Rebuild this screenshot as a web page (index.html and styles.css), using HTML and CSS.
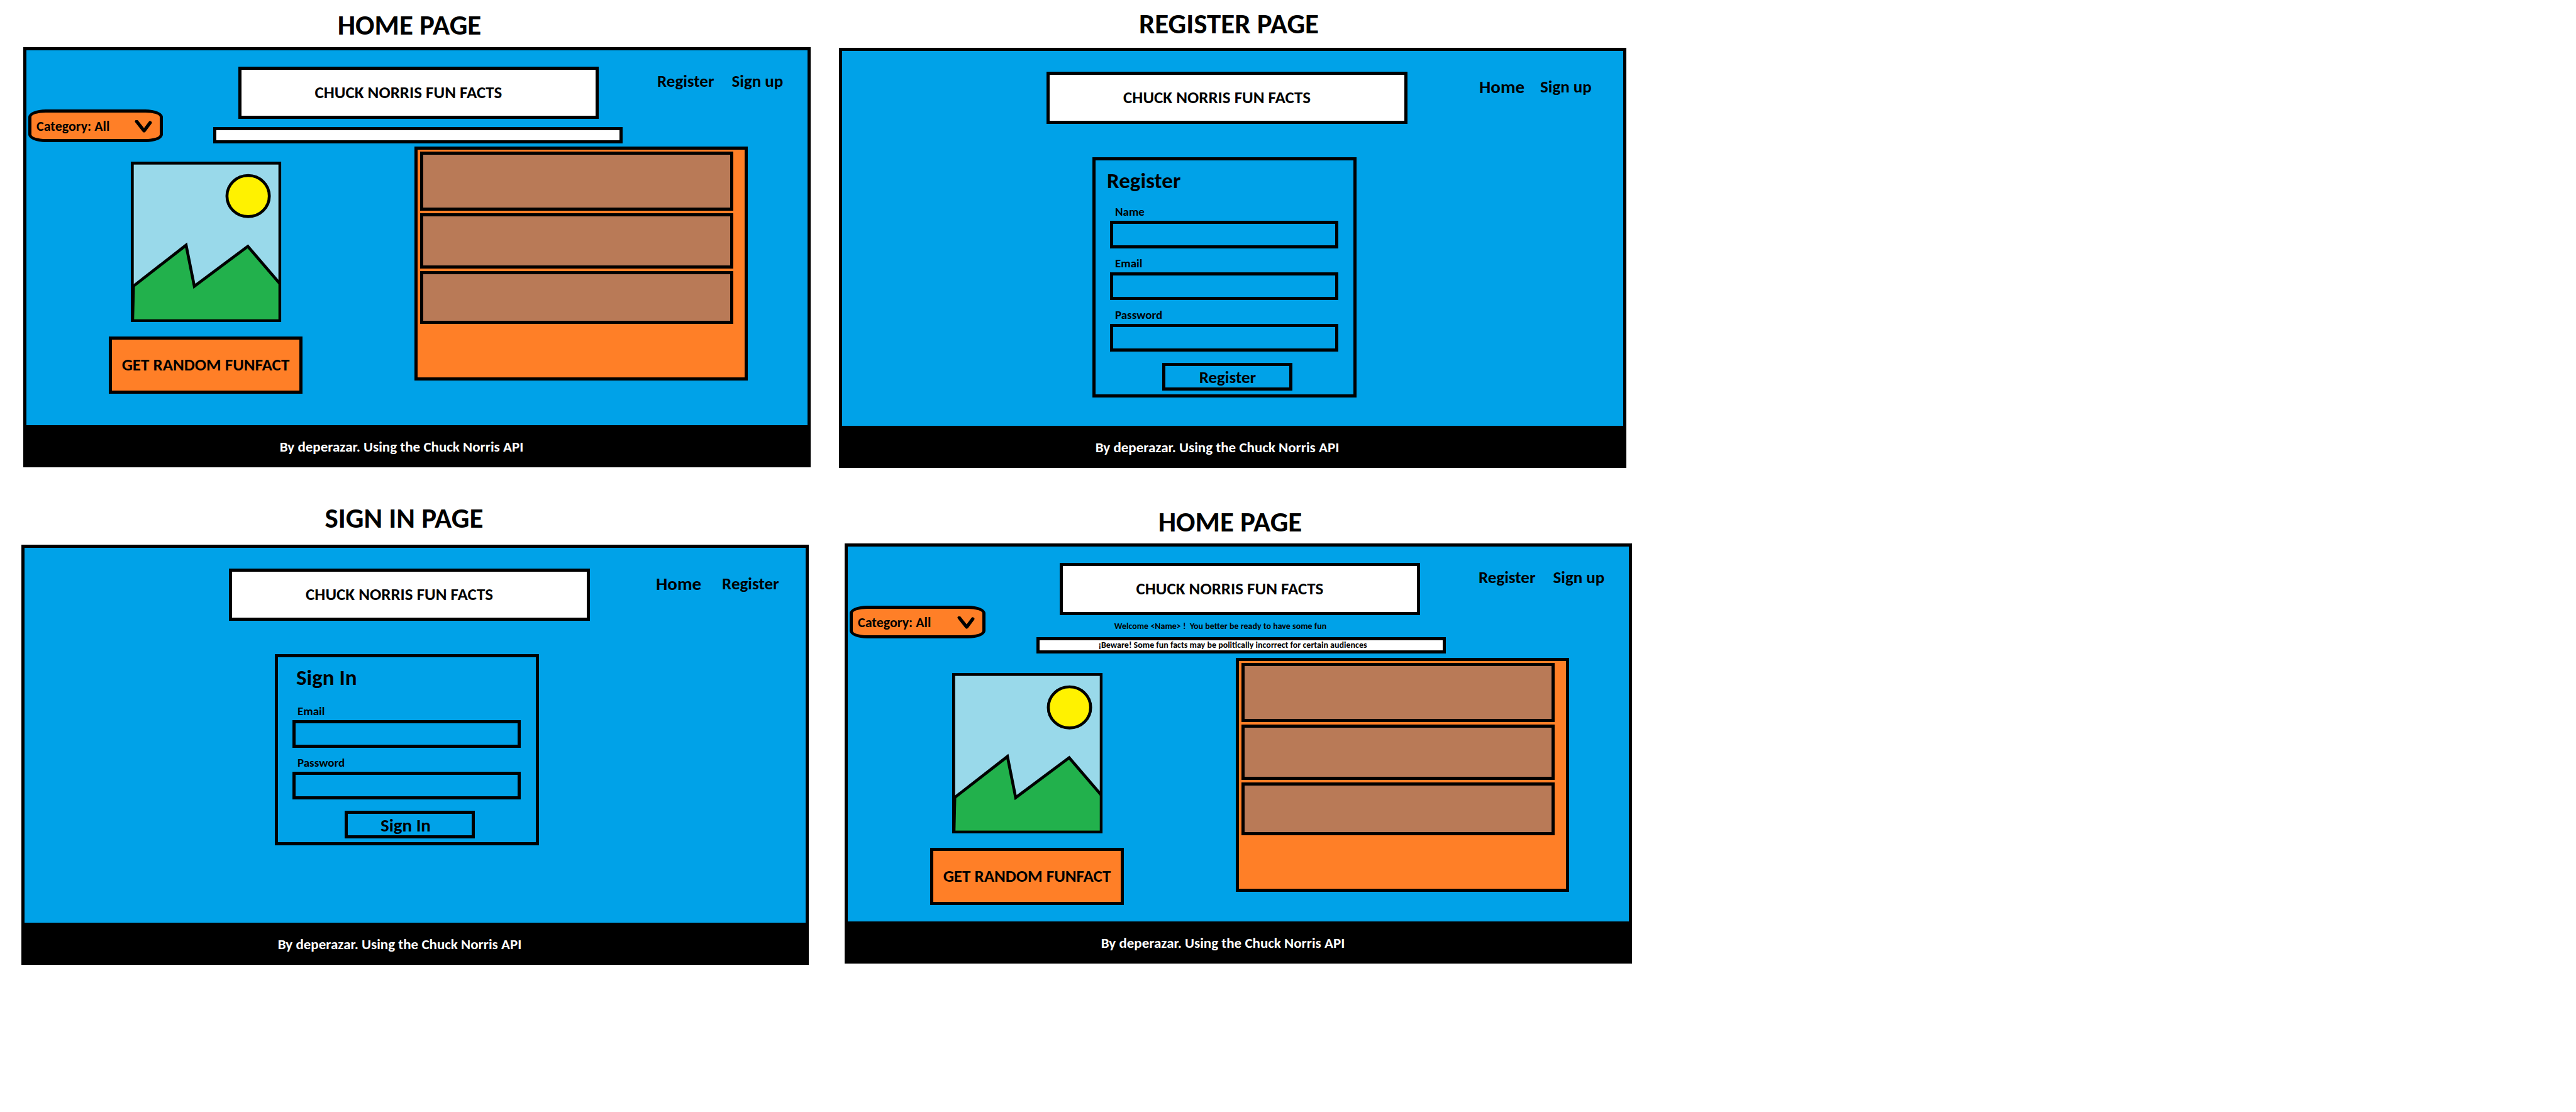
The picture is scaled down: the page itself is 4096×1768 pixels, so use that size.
FILE: index.html
```
<!DOCTYPE html>
<html lang="en">
<head>
<meta charset="utf-8">
<title>Chuck Norris Fun Facts - Wireframes</title>
<link rel="stylesheet" href="styles.css">
</head>
<body>
<svg class="sprite" aria-hidden="true">
  <symbol id="chevron" viewBox="0 0 26 20" preserveAspectRatio="none">
    <path d="M3 2 14 17 23 4" fill="none" stroke="#000" stroke-width="5" stroke-linecap="round" stroke-linejoin="round"/>
  </symbol>
  <symbol id="landscape" viewBox="0 0 256 273">
    <rect width="256" height="273" fill="#99d9ea"/>
    <path d="M4 212 94 142 108 212 199 144 253 207V271H4Z" fill="#22b14c"/>
    <path d="M4 212 94 142 108 212 199 144 253 207" fill="none" stroke="#000" stroke-width="5"/>
    <path d="M4.500 210 3 273" stroke="#000" stroke-width="5"/>
    <ellipse cx="199.500" cy="58.500" rx="36" ry="35" fill="#fff200" stroke="#000" stroke-width="5"/>
    <rect x="2.500" y="2.500" width="251" height="268" fill="none" stroke="#000" stroke-width="5"/>
  </symbol>
</svg>

<main class="board">
  <div class="board-row board-row-top">
    <section class="page page-home">
      <h1 class="page-title">HOME PAGE</h1>
      <div class="screen">
        <div class="screen-body">
          <header class="header header-home">
            <div class="category">
              <select class="category-select" aria-label="Category">
                <option>Category: All</option>
              </select>
              <svg class="category-icon"><use href="#chevron"/></svg>
            </div>
            <div class="banner">
              <h2 class="brand">CHUCK NORRIS FUN FACTS</h2>
              <p class="notice notice-empty"></p>
            </div>
            <nav class="nav">
              <a class="nav-link" href="#register">Register</a>
              <a class="nav-link" href="#signin">Sign up</a>
            </nav>
          </header>
          <div class="content">
            <div class="random">
              <svg class="picture" viewBox="0 0 256 273" role="img" aria-label="Landscape"><use href="#landscape"/></svg>
              <button class="random-button" type="button">GET RANDOM FUNFACT</button>
            </div>
            <ul class="facts">
              <li class="fact fact-large"></li>
              <li class="fact"></li>
              <li class="fact fact-small"></li>
            </ul>
          </div>
        </div>
        <footer class="footer">By deperazar. Using the Chuck Norris API</footer>
      </div>
    </section>

    <section class="page page-register" id="register">
      <h1 class="page-title">REGISTER PAGE</h1>
      <div class="screen">
        <div class="screen-body">
          <header class="header header-form">
            <div></div>
            <h2 class="brand">CHUCK NORRIS FUN FACTS</h2>
            <nav class="nav">
              <a class="nav-link nav-link-home" href="#home">Home</a>
              <a class="nav-link" href="#signin">Sign up</a>
            </nav>
          </header>
          <div class="card-row">
            <form class="card">
              <h3 class="card-title">Register</h3>
              <div class="fields">
                <div class="field">
                  <label class="label" for="reg-name">Name</label>
                  <input class="input" id="reg-name" type="text">
                </div>
                <div class="field">
                  <label class="label" for="reg-email">Email</label>
                  <input class="input" id="reg-email" type="email">
                </div>
                <div class="field">
                  <label class="label" for="reg-password">Password</label>
                  <input class="input" id="reg-password" type="password">
                </div>
              </div>
              <button class="submit" type="button">Register</button>
            </form>
          </div>
        </div>
        <footer class="footer">By deperazar. Using the Chuck Norris API</footer>
      </div>
    </section>
  </div>

  <div class="board-row board-row-bottom">
    <section class="page page-signin" id="signin">
      <h1 class="page-title">SIGN IN PAGE</h1>
      <div class="screen">
        <div class="screen-body">
          <header class="header header-form">
            <div></div>
            <h2 class="brand">CHUCK NORRIS FUN FACTS</h2>
            <nav class="nav">
              <a class="nav-link nav-link-home" href="#home">Home</a>
              <a class="nav-link" href="#register">Register</a>
            </nav>
          </header>
          <div class="card-row">
            <form class="card">
              <h3 class="card-title">Sign In</h3>
              <div class="fields">
                <div class="field">
                  <label class="label" for="sign-email">Email</label>
                  <input class="input" id="sign-email" type="email">
                </div>
                <div class="field">
                  <label class="label" for="sign-password">Password</label>
                  <input class="input" id="sign-password" type="password">
                </div>
              </div>
              <button class="submit" type="button">Sign In</button>
            </form>
          </div>
        </div>
        <footer class="footer">By deperazar. Using the Chuck Norris API</footer>
      </div>
    </section>

    <section class="page page-member" id="home">
      <h1 class="page-title">HOME PAGE</h1>
      <div class="screen">
        <div class="screen-body">
          <header class="header header-home">
            <div class="category">
              <select class="category-select" aria-label="Category">
                <option>Category: All</option>
              </select>
              <svg class="category-icon"><use href="#chevron"/></svg>
            </div>
            <div class="banner">
              <h2 class="brand">CHUCK NORRIS FUN FACTS</h2>
              <p class="welcome">Welcome &lt;Name&gt; !&nbsp; You better be ready to have some fun</p>
              <p class="notice">¡Beware! Some fun facts may be politically incorrect for certain audiences</p>
            </div>
            <nav class="nav">
              <a class="nav-link" href="#register">Register</a>
              <a class="nav-link" href="#signin">Sign up</a>
            </nav>
          </header>
          <div class="content">
            <div class="random">
              <svg class="picture" viewBox="0 0 256 273" role="img" aria-label="Landscape"><use href="#landscape"/></svg>
              <button class="random-button" type="button">GET RANDOM FUNFACT</button>
            </div>
            <ul class="facts">
              <li class="fact fact-large"></li>
              <li class="fact"></li>
              <li class="fact fact-small"></li>
            </ul>
          </div>
        </div>
        <footer class="footer">By deperazar. Using the Chuck Norris API</footer>
      </div>
    </section>
  </div>
</main>
</body>
</html>
```
FILE: styles.css
```
:root {
  --blue: #00a2e8;
  --orange: #ff7f27;
  --brown: #b97a57;
  --line: 5px solid #000;
}

* {
  box-sizing: border-box;
}

body {
  margin: 0;
  background: #fff;
  color: #000;
  font-family: Carlito, Calibri, Lato, sans-serif;
  font-size: 27px;
  font-weight: 700;
  line-height: 28px;
}

h1, h2, h3, p, ul {
  margin: 0;
  padding: 0;
  font-size: inherit;
}

ul {
  list-style: none;
}

button, input, select {
  margin: 0;
  color: inherit;
  font: inherit;
}

.sprite {
  display: none;
}

/* Board: two rows of two wireframes, free space on the right */
.board-row {
  display: grid;
}

.board-row-top {
  grid-template-columns: 1252fr 1252fr 1465fr;
  column-gap: 45px;
  padding-left: 37px;
}

.board-row-bottom {
  grid-template-columns: 1252fr 1252fr 1444fr;
  column-gap: 57px;
  padding-left: 34px;
}

.page-title {
  font-size: 45px;
  line-height: 48px;
  text-align: center;
}

.page-home .page-title {
  padding: 16px 24px 11px 0;
}

.page-register .page-title {
  padding: 14px 12px 14px 0;
}

.page-signin .page-title {
  padding: 56px 35px 18px 0;
}

.page-member .page-title {
  padding: 62px 26px 10px 0;
}

/* Screen frame */
.screen {
  border: var(--line);
  background: var(--blue);
}

.screen-body {
  min-height: 596px;
}

.footer {
  padding: 22px 49px 16px 0;
  background: #000;
  color: #fff;
  font-size: 23px;
  line-height: 24px;
  text-align: center;
}

/* Header */
.header {
  display: grid;
  align-items: start;
}

.header-home {
  grid-template-columns: 297fr 651fr 294fr;
  padding-top: 26px;
}

.header-form {
  grid-template-columns: 325fr 574fr 343fr;
  padding-top: 33px;
}

.brand {
  padding: 22px 32px 23px 0;
  border: var(--line);
  background: #fff;
  text-align: center;
}

.banner .brand {
  width: 88%;
  margin-left: 40px;
}

.nav {
  display: flex;
  gap: 28px;
  padding: 9px 0 0 55px;
}

.page-register .nav {
  gap: 25px;
  padding: 10px 0 0 114px;
}

.page-signin .nav {
  gap: 33px;
  padding: 10px 0 0 105px;
}

.nav-link {
  color: inherit;
  text-decoration: none;
}

.nav-link-home {
  font-size: 29px;
}

.category {
  position: relative;
  width: 72%;
  margin: 68px 0 0 3px;
}

.category-select {
  display: block;
  width: 100%;
  height: 52px;
  padding: 2px 8px 0;
  border: var(--line);
  border-radius: 28px / 12px;
  background: var(--orange);
  font-size: 22px;
  appearance: none;
}

.category-icon {
  position: absolute;
  top: 17px;
  right: 17px;
  width: 28px;
  height: 20px;
  pointer-events: none;
}

.welcome {
  padding-right: 66px;
  font-size: 14px;
  line-height: 35px;
  text-align: center;
}

.notice {
  padding-right: 27px;
  border: var(--line);
  background: #fff;
  font-size: 14px;
  line-height: 16px;
  text-align: center;
}

.notice-empty {
  height: 26px;
  margin-top: 13px;
}

/* Home content */
.content {
  display: grid;
  grid-template-columns: 570fr 47fr 530fr 95fr;
  align-items: start;
  padding-top: 5px;
}

.page-member .header-home {
  grid-template-columns: 300fr 651fr 291fr;
}

.page-member .brand {
  margin-left: 37px;
}

.page-member .nav {
  padding-left: 52px;
}

.page-member .content {
  padding-top: 7px;
}

.random {
  display: flex;
  flex-direction: column;
  align-items: center;
  gap: 23px;
  padding-top: 24px;
}

.picture {
  display: block;
  width: 42%;
  margin-left: 2px;
}

.random-button {
  width: 54%;
  padding: 26px 0 28px;
  border: var(--line);
  background: var(--orange);
  line-height: 27px;
}

.facts {
  display: flex;
  grid-column: 3;
  flex-direction: column;
  gap: 4px;
  min-height: 372px;
  padding: 3px 18px 4px 4px;
  border: var(--line);
  background: var(--orange);
}

.fact {
  height: 88px;
  border: var(--line);
  background: var(--brown);
}

.fact-large {
  height: 94px;
}

.fact-small {
  height: 84px;
}

/* Forms */
.card-row {
  display: grid;
  grid-template-columns: 398fr 420fr 424fr;
  padding-top: 53px;
}

.card {
  grid-column: 2;
  padding: 14px 24px 6px 23px;
  border: var(--line);
}

.card-title {
  margin-left: -5px;
  font-size: 35px;
  line-height: 36px;
}

.page-signin .card-title {
  margin-left: 6px;
}

.fields {
  display: grid;
  gap: 14px;
  padding-top: 22px;
}

.page-signin .fields {
  padding-top: 26px;
}

.field {
  display: grid;
  gap: 4px;
}

.label {
  padding-left: 8px;
  font-size: 19px;
  line-height: 20px;
}

.input {
  width: 100%;
  height: 44px;
  padding: 0 8px;
  border: var(--line);
  background: transparent;
}

.submit {
  display: block;
  width: 57%;
  height: 44px;
  margin: 18px 0 0 23%;
  padding: 1px 0 0;
  border: var(--line);
  background: transparent;
}

.page-signin .submit {
  padding-right: 14px;
  font-size: 29px;
}
```
